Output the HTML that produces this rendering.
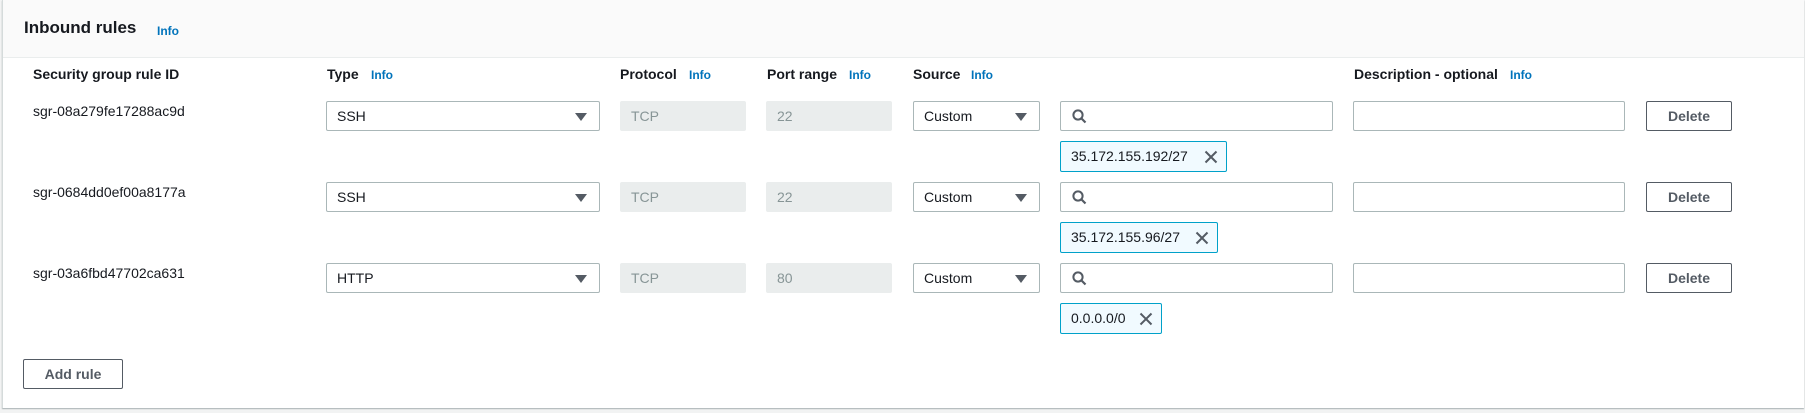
<!DOCTYPE html>
<html><head><meta charset="utf-8"><style>
body{margin:0;width:1805px;height:413px;background:#f2f3f3;font-family:"Liberation Sans",sans-serif;position:relative;overflow:hidden;color:#16191f}
.panel{position:absolute;left:2px;top:0;width:1801px;height:408px;background:#fff;border-left:1px solid #d5dbdb;box-shadow:0 1px 1px 0 rgba(0,28,36,.3)}
.hdr{position:absolute;left:0;top:0;right:0;height:57px;background:#fafafa;border-bottom:1px solid #eaeded}
.a{position:absolute;white-space:nowrap}
h2{position:absolute;left:21px;top:18px;margin:0;font-size:17px;font-weight:bold}
.info{color:#0073bb;font-size:12px;font-weight:bold}
.lbl{font-size:14px;font-weight:bold;top:66px}
.box{position:absolute;box-sizing:border-box;height:30px;border:1px solid #aab7b8;border-radius:2px;font-size:14px;line-height:28px;padding-left:10px;background:#fff}
.dis{background:#eaeded;border-color:#eaeded;color:#879596}
.arr{position:absolute;right:12px;top:11px;width:0;height:0;border-left:6px solid transparent;border-right:6px solid transparent;border-top:8px solid #545b64}
.btn{position:absolute;box-sizing:border-box;height:30px;border:1px solid #545b64;border-radius:2px;font-size:14px;font-weight:bold;color:#545b64;text-align:center;line-height:28px;background:#fff}
.tok{position:absolute;box-sizing:border-box;height:31px;border:1px solid #00a1c9;border-radius:2px;background:#f1faff;font-size:14px;line-height:29px;padding-left:10px}
.x{position:absolute;right:8px;top:8px}
.id{font-size:14px;left:33px}
</style></head><body>
<div class="panel">
<div class="hdr"><h2>Inbound rules</h2><span class="a info" style="left:154px;top:24px">Info</span></div>
</div>
<div class="a lbl" style="left:33px">Security group rule ID</div>
<div class="a lbl" style="left:327px">Type</div><div class="a info" style="left:371px;top:68px">Info</div>
<div class="a lbl" style="left:620px">Protocol</div><div class="a info" style="left:689px;top:68px">Info</div>
<div class="a lbl" style="left:767px">Port range</div><div class="a info" style="left:849px;top:68px">Info</div>
<div class="a lbl" style="left:913px">Source</div><div class="a info" style="left:971px;top:68px">Info</div>
<div class="a lbl" style="left:1354px">Description - optional</div><div class="a info" style="left:1510px;top:68px">Info</div>

<div id="rows"></div>
<script>
var rows=[["sgr-08a279fe17288ac9d","SSH","22","35.172.155.192/27",167,101],["sgr-0684dd0ef00a8177a","SSH","22","35.172.155.96/27",158,182],["sgr-03a6fbd47702ca631","HTTP","80","0.0.0.0/0",102,263]];
var h="";
rows.forEach(function(r){var y=r[5];
h+='<div class="a id" style="top:'+(y+2)+'px">'+r[0]+'</div>';
h+='<div class="box" style="left:326px;top:'+y+'px;width:274px">'+r[1]+'<div class="arr"></div></div>';
h+='<div class="box dis" style="left:620px;top:'+y+'px;width:126px">TCP</div>';
h+='<div class="box dis" style="left:766px;top:'+y+'px;width:126px">'+r[2]+'</div>';
h+='<div class="box" style="left:913px;top:'+y+'px;width:127px">Custom<div class="arr"></div></div>';
h+='<div class="box" style="left:1060px;top:'+y+'px;width:273px"><svg style="position:absolute;left:11px;top:7px" width="15" height="15" viewBox="0 0 15 15"><circle cx="6" cy="6" r="4.6" fill="none" stroke="#545b64" stroke-width="2"/><path d="M9.5 9.5L13.5 13.5" stroke="#545b64" stroke-width="2.2"/></svg></div>';
h+='<div class="box" style="left:1353px;top:'+y+'px;width:272px"></div>';
h+='<div class="btn" style="left:1646px;top:'+y+'px;width:86px">Delete</div>';
h+='<div class="tok" style="left:1060px;top:'+(y+40)+'px;width:'+r[4]+'px">'+r[3]+'<svg class="x" width="14" height="14" viewBox="0 0 14 14"><path d="M1.5 1.5L12.5 12.5M12.5 1.5L1.5 12.5" stroke="#545b64" stroke-width="2"/></svg></div>';
});
document.getElementById("rows").innerHTML=h;
</script>
<div class="btn" style="left:23px;top:359px;width:100px">Add rule</div>
</body></html>
